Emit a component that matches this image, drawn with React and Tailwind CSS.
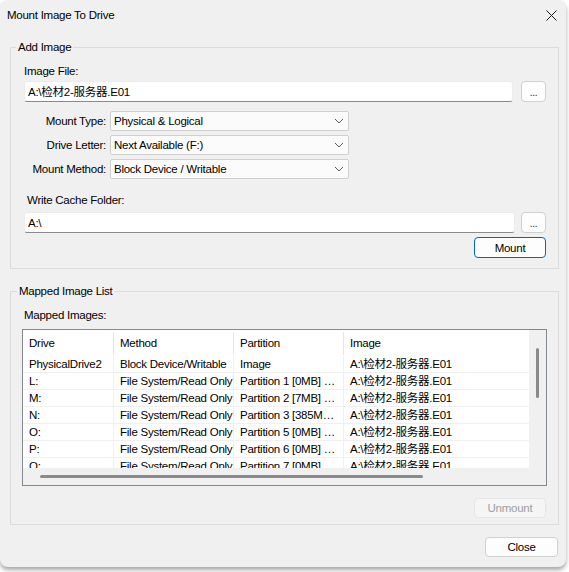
import React from 'react';

const font = { fontFamily: '"Liberation Sans", "Noto Sans CJK SC", sans-serif' };

const rows = [
    { drive: 'PhysicalDrive2', method: 'Block Device/Writable', part: 'Image', image: 'A:\\检材2-服务器.E01' },
    { drive: 'L:', method: 'File System/Read Only', part: 'Partition 1 [0MB] …', image: 'A:\\检材2-服务器.E01' },
    { drive: 'M:', method: 'File System/Read Only', part: 'Partition 2 [7MB] …', image: 'A:\\检材2-服务器.E01' },
    { drive: 'N:', method: 'File System/Read Only', part: 'Partition 3 [385M…', image: 'A:\\检材2-服务器.E01' },
    { drive: 'O:', method: 'File System/Read Only', part: 'Partition 5 [0MB] …', image: 'A:\\检材2-服务器.E01' },
    { drive: 'P:', method: 'File System/Read Only', part: 'Partition 6 [0MB] …', image: 'A:\\检材2-服务器.E01' },
    { drive: 'Q:', method: 'File System/Read Only', part: 'Partition 7 [0MB]', image: 'A:\\检材2-服务器.E01' },
];

const Chevron = () => (
    <svg width="10" height="6" viewBox="0 0 10 6" className="shrink-0">
        <path d="M1 1 L5 5 L9 1" fill="none" stroke="#5f5f5f" strokeWidth="1" />
    </svg>
);

const Select = ({ label, value }) => (
    <div className="flex items-center gap-[4px]">
        <span className="w-[82px] text-right whitespace-nowrap">{label}</span>
        <div className="w-[239px] h-[20px] flex items-center justify-between pl-[3px] pr-[4px] bg-[#fbfbfb] border border-[#cfcfcf] rounded-[2px]">
            <span>{value}</span>
            <Chevron />
        </div>
    </div>
);

const DotsButton = () => (
    <button type="button" className="w-[25px] h-[21px] flex items-end justify-center pb-[3px] bg-[#fdfdfd] border border-[#d0d0d0] rounded-[4px] text-[10px] leading-none text-[#1a1a1a]">
        ...
    </button>
);

const cols = ['w-[90px]', 'w-[120px]', 'w-[110px]', 'w-[185px]'];

const App = () => {
    return (
        <div className="w-[569px] h-[572px] bg-white text-[11.5px] tracking-[-0.25px] leading-[16px] text-black" style={font}>
            <div className="w-[566px] h-[567px] bg-[#f0f0f0] rounded-lg shadow-[0_3px_4px_rgba(0,0,0,0.35)] flex flex-col">
                {/* title bar */}
                <div className="h-[30px] flex items-center justify-between pl-[7px] pr-[9px]">
                    <span>Mount Image To Drive</span>
                    <svg width="11" height="11" viewBox="0 0 11 11">
                        <path d="M0.5 0.5 L10.5 10.5 M10.5 0.5 L0.5 10.5" stroke="#1a1a1a" strokeWidth="1" />
                    </svg>
                </div>

                <div className="pl-[10px] pr-[7px] flex flex-col">
                    {/* Add Image */}
                    <fieldset className="mt-[9px] border border-[#dcdcdc] pl-[13px] pr-[12px] pt-[8px] pb-[10px]">
                        <legend className="ml-[-8px] px-[2px]">Add Image</legend>
                        <div>Image File:</div>
                        <div className="mt-[2px] flex items-center gap-[8px]">
                            <div className="flex-1 h-[21px] flex items-center pl-[3px] bg-white border border-[#ececec] border-b-[#8a8a8a] rounded-[3px]">
                                A:\检材2-服务器.E01
                            </div>
                            <DotsButton />
                        </div>
                        <div className="mt-[9px] flex flex-col gap-[4px]">
                            <Select label="Mount Type:" value="Physical & Logical" />
                            <Select label="Drive Letter:" value="Next Available (F:)" />
                            <Select label="Mount Method:" value="Block Device / Writable" />
                        </div>
                        <div className="mt-[13px] pl-[3px]">Write Cache Folder:</div>
                        <div className="mt-[4px] flex items-center gap-[6px]">
                            <div className="flex-1 h-[21px] flex items-center pl-[3px] bg-white border border-[#ececec] border-b-[#8a8a8a] rounded-[3px]">
                                A:\
                            </div>
                            <DotsButton />
                        </div>
                        <div className="mt-[4px] flex justify-end">
                            <button type="button" className="w-[72px] h-[21px] bg-[#fdfdfd] border border-[#0067c0] rounded-[4px]">
                                Mount
                            </button>
                        </div>
                    </fieldset>

                    {/* Mapped Image List */}
                    <fieldset className="mt-[14px] border border-[#dcdcdc] pl-[13px] pr-[12px] pt-[8px] pb-[6px]">
                        <legend className="ml-[-7px] px-[2px]">Mapped Image List</legend>
                        <div>Mapped Images:</div>
                        <div className="mt-[6px] ml-[-2px] mr-[-1px] border border-[#828790] bg-white flex flex-col">
                            <div className="flex h-[138px]">
                                <div className="flex-1 overflow-hidden">
                                    <div className="flex h-[26px] items-center">
                                        {['Drive', 'Method', 'Partition', 'Image'].map((h, i) => (
                                            <div key={h} className={`${cols[i]} shrink-0 h-[23px] flex items-center pl-[6px] ${i > 0 ? 'border-l border-[#e5e5e5]' : ''}`}>
                                                {h}
                                            </div>
                                        ))}
                                    </div>
                                    {rows.map((r) => (
                                        <div key={r.drive} className="flex h-[17px] border-b border-[#f0f0f0] whitespace-nowrap">
                                            <div className={`${cols[0]} shrink-0 pl-[6px] flex items-center overflow-hidden`}>{r.drive}</div>
                                            <div className={`${cols[1]} shrink-0 pl-[6px] flex items-center border-l border-[#f0f0f0] overflow-hidden`}>{r.method}</div>
                                            <div className={`${cols[2]} shrink-0 pl-[6px] flex items-center border-l border-[#f0f0f0] overflow-hidden`}>{r.part}</div>
                                            <div className={`${cols[3]} shrink-0 pl-[6px] flex items-center border-l border-[#f0f0f0]`}>{r.image}</div>
                                        </div>
                                    ))}
                                </div>
                                <div className="w-[17px] bg-[#f0f0f0] flex justify-center pt-[18px]">
                                    <div className="w-[3px] h-[50px] bg-[#8a8a8a] rounded-full" />
                                </div>
                            </div>
                            <div className="h-[17px] bg-[#f0f0f0] flex items-center pl-[17px]">
                                <div className="w-[383px] h-[3px] bg-[#8a8a8a] rounded-full" />
                            </div>
                        </div>
                        <div className="mt-[12px] flex justify-end">
                            <button type="button" className="w-[72px] h-[20px] bg-[#f5f5f5] border border-[#e5e5e5] rounded-[4px] text-[#a0a0a0]">
                                Unmount
                            </button>
                        </div>
                    </fieldset>

                    <div className="mt-[12px] flex justify-end pr-[1px]">
                        <button type="button" className="w-[73px] h-[20px] bg-[#fdfdfd] border border-[#d0d0d0] rounded-[4px]">
                            Close
                        </button>
                    </div>
                </div>
            </div>
        </div>
    );
};

export default App;
